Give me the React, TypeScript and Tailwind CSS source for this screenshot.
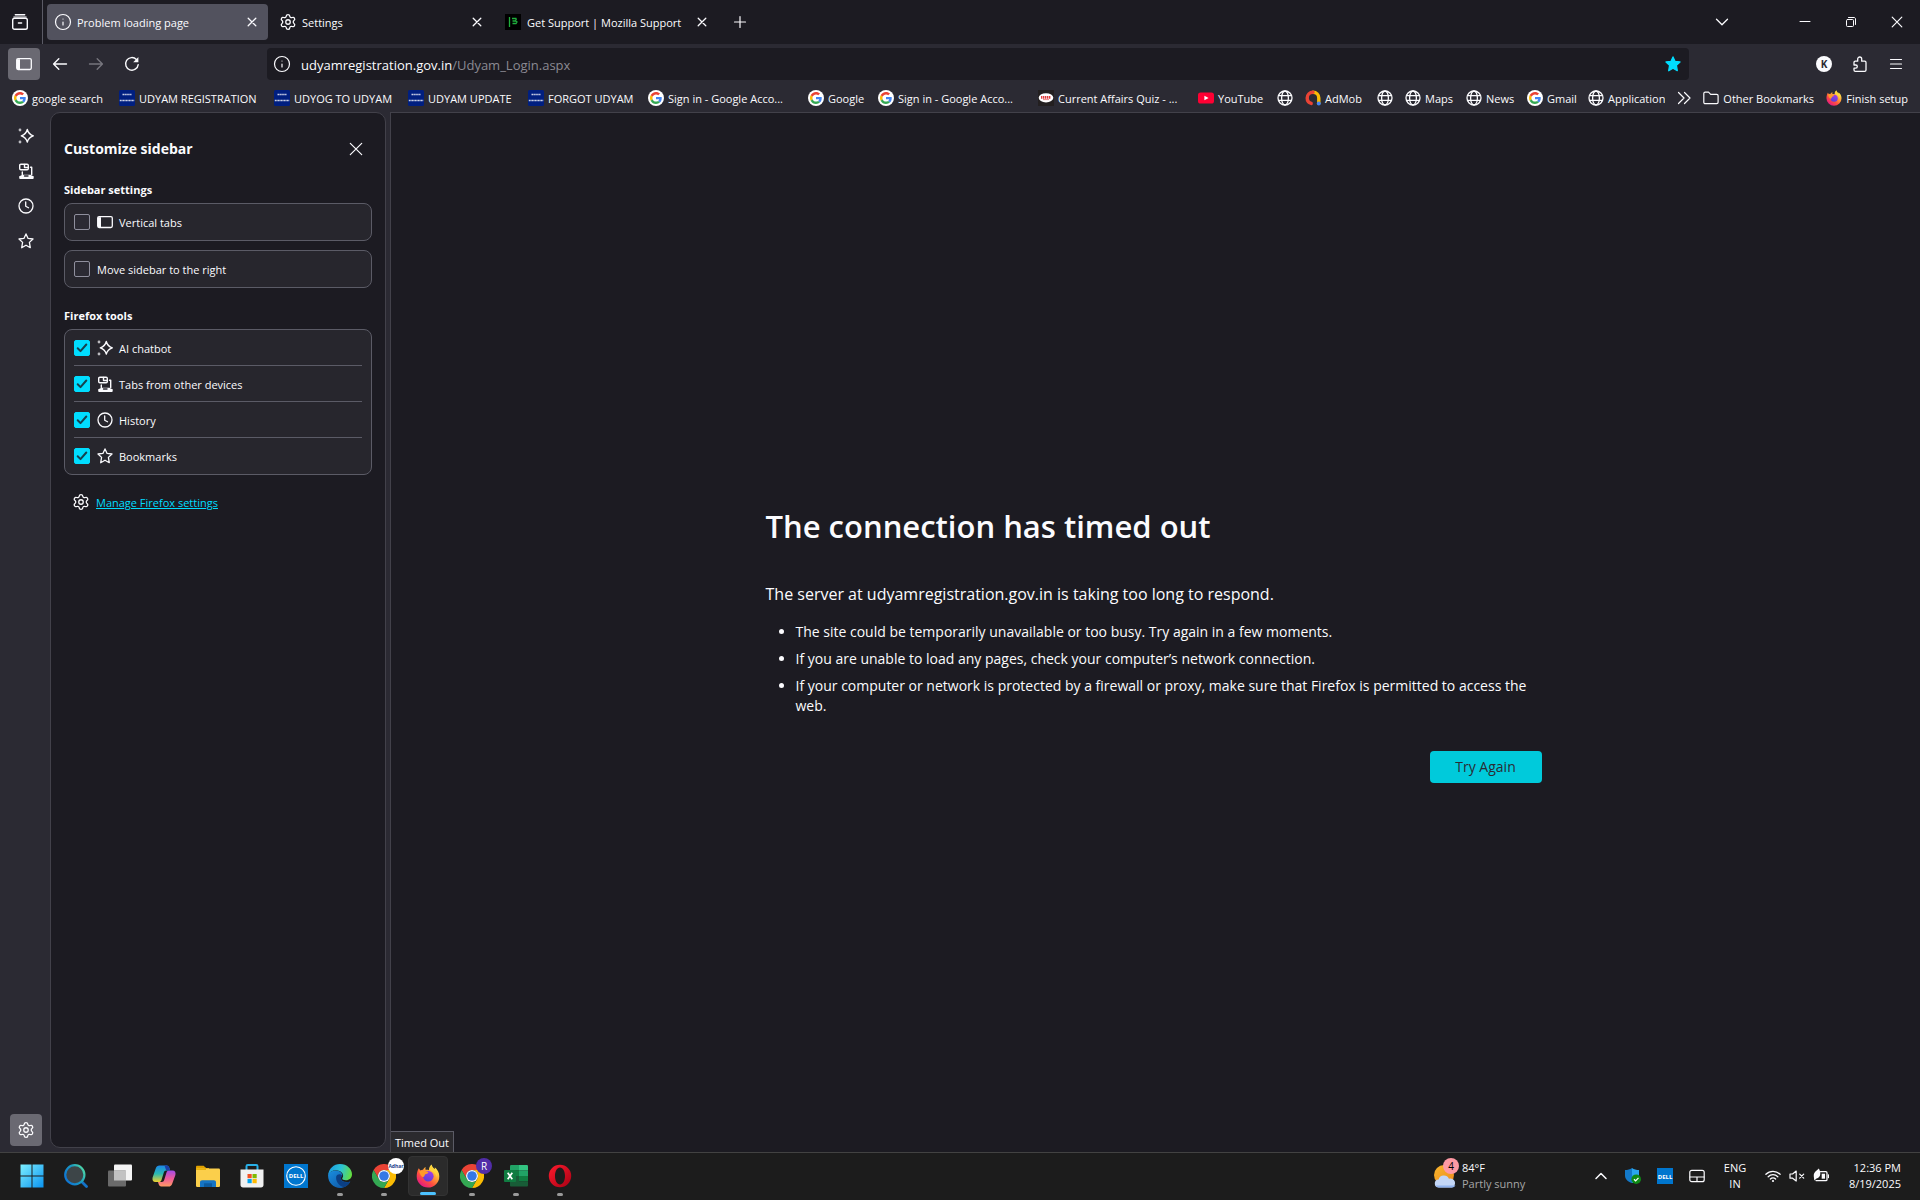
import React, { useState } from 'react';
import { Info, Settings } from 'lucide-react';

interface IconProps {
  className?: string;
}

const line = {
  fill: 'none',
  stroke: 'currentColor',
  strokeLinecap: 'round',
  strokeLinejoin: 'round',
} as const;

/* ---------- browser icons ---------- */

const RecentIcon: React.FC<IconProps> = ({ className = 'size-4' }) => (
  <svg className={className} viewBox="0 0 16 16" {...line} strokeWidth="1.4">
    <path d="M3.3.7h9.4" />
    <path d="M1.8 3h12.4" strokeWidth="1" />
    <rect x=".7" y="4.2" width="14.6" height="11" rx="1.8" />
    <path d="M6.4 9h3.2" />
  </svg>
);

const SidebarIcon: React.FC<IconProps> = ({ className = 'size-4' }) => (
  <svg className={className} viewBox="0 0 16 16" {...line} strokeWidth="1.3">
    <rect x=".7" y="2.7" width="14.6" height="10.8" rx="1.4" />
    <path d="M1 3.2h3v9.8H1z" fill="currentColor" stroke="none" />
  </svg>
);

const CloseIcon: React.FC<IconProps> = ({ className = 'size-4' }) => (
  <svg className={className} viewBox="0 0 16 16" {...line} strokeWidth="1.3">
    <path d="M4.2 4.2l7.6 7.6M11.8 4.2l-7.6 7.6" />
  </svg>
);

const BigCloseIcon: React.FC<IconProps> = ({ className = 'size-4' }) => (
  <svg className={className} viewBox="0 0 16 16" {...line} strokeWidth="1.2">
    <path d="M2.3 2.3l11.4 11.4M13.7 2.3L2.3 13.7" />
  </svg>
);

const PlusIcon: React.FC<IconProps> = ({ className = 'size-4' }) => (
  <svg className={className} viewBox="0 0 16 16" {...line} strokeWidth="1.2">
    <path d="M8 2.5v11M2.5 8h11" />
  </svg>
);

const ArrowIcon: React.FC<IconProps> = ({ className = 'size-4' }) => (
  <svg className={className} viewBox="0 0 16 16" {...line} strokeWidth="1.4">
    <path d="M14.5 8H1.8M6.8 2.8L1.6 8l5.2 5.2" />
  </svg>
);

const ReloadIcon: React.FC<IconProps> = ({ className = 'size-4' }) => (
  <svg className={className} viewBox="0 0 16 16" {...line} strokeWidth="1.4">
    <path d="M14.2 8.6A6.3 6.3 0 1 1 12.4 3.4" />
    <path d="M14.4 1v5.2H9.2z" fill="currentColor" stroke="none" />
  </svg>
);

const PuzzleIcon: React.FC<IconProps> = ({ className = 'size-4' }) => (
  <svg className={className} viewBox="0 0 16 16" {...line} strokeWidth="1.3">
    <path d="M2 9V6.500a1.300 1.300 0 0 1 1.300-1.300h2.400V3a2 2 0 0 1 4 0v2.200h3a1.300 1.300 0 0 1 1.300 1.300v7.500a1.300 1.300 0 0 1-1.300 1.300H3.300A1.300 1.300 0 0 1 2 14v-1.800h1.700a1.600 1.600 0 0 0 0-3.200z" />
  </svg>
);

const MenuIcon: React.FC<IconProps> = ({ className = 'size-4' }) => (
  <svg className={className} viewBox="0 0 16 16" {...line} strokeWidth="1.2">
    <path d="M2.500 3.500h11M2.500 8h11M2.500 12.500h11" />
  </svg>
);

const StarIcon: React.FC<IconProps & { filled?: boolean }> = ({ className = 'size-4', filled }) => (
  <svg className={className} viewBox="0 0 16 16" {...line} strokeWidth="1.3" fill={filled ? 'currentColor' : 'none'}>
    <path d="M8 .9l2.100 4.500 4.900.6-3.600 3.400.9 5.300L8 12.200l-4.300 2.500.9-5.300L1 6l4.900-.6z" />
  </svg>
);

const SparkleIcon: React.FC<IconProps> = ({ className = 'size-4' }) => (
  <svg className={className} viewBox="0 0 16 16" {...line} strokeWidth="1.400">
    <path d="M9.300 1.500c.9 3.700 2.300 5.100 6 6.300-3.700 1.200-5.100 2.600-6 6.300-.9-3.700-2.300-5.100-6-6.300 3.700-1.200 5.100-2.600 6-6.300z" />
    <circle cx="2" cy="2" r="1.400" fill="currentColor" stroke="none" opacity=".7" />
    <circle cx="2" cy="14" r="1.400" fill="currentColor" stroke="none" opacity=".7" />
  </svg>
);

const DevicesIcon: React.FC<IconProps> = ({ className = 'size-4' }) => (
  <svg className={className} viewBox="0 0 16 16" {...line} strokeWidth="1.4">
    <rect x="1.700" y="1.200" width="8.600" height="5.600" rx="1.200" />
    <path d="M6.500 1.500v3h3.600" />
    <path d="M12.500 4.200h1.200v7.300M4.300 9v2.500" />
    <path d="M1.200 13.200c2-.2 2-1.400 3.300-1.400h8c1 0 1 1.200 3.200 1.400v1.800c0 .6-.3.9-.9.9H2.100c-.6 0-.9-.3-.9-.9z" fill="currentColor" stroke="none" />
    <path d="M6.500 13h3.500" stroke="#2b2a33" />
  </svg>
);

const ClockIcon: React.FC<IconProps> = ({ className = 'size-4' }) => (
  <svg className={className} viewBox="0 0 16 16" {...line} strokeWidth="1.3">
    <circle cx="8" cy="8" r="7" />
    <path d="M7.700 4v4.300l2.800 1.500" />
  </svg>
);

const GlobeIcon: React.FC<IconProps> = ({ className = 'size-4' }) => (
  <svg className={className} viewBox="0 0 16 16" {...line} strokeWidth="1.3">
    <circle cx="8" cy="8" r="7" />
    <ellipse cx="8" cy="8" rx="3.400" ry="7" />
    <path d="M1.700 5.700h12.600M1.700 10.400h12.600" />
  </svg>
);

const FolderIcon: React.FC<IconProps> = ({ className = 'size-4' }) => (
  <svg className={className} viewBox="0 0 16 16" {...line} strokeWidth="1.2">
    <path d="M.8 12.300V3.500c0-.8.6-1.400 1.400-1.400h3.300L7.700 4.300h6c.8 0 1.400.6 1.400 1.400v6.600c0 .8-.6 1.400-1.400 1.400H2.200c-.8 0-1.400-.6-1.400-1.400z" />
  </svg>
);

/* ---------- site icons ---------- */

const GoogleIcon: React.FC = () => (
  <svg className="size-4" viewBox="0 0 64 64">
    <circle cx="32" cy="32" r="32" fill="#fff" />
    <g transform="translate(8 8)">
      <path fill="#ea4335" d="M24 9.500c3.540 0 6.710 1.220 9.210 3.600l6.850-6.850C35.900 2.380 30.470 0 24 0 14.620 0 6.510 5.380 2.560 13.220l7.980 6.190C12.430 13.720 17.740 9.500 24 9.500z" />
      <path fill="#4285f4" d="M46.980 24.550c0-1.570-.15-3.090-.38-4.550H24v9.020h12.940c-.58 2.960-2.260 5.480-4.780 7.180l7.730 6c4.510-4.180 7.090-10.360 7.090-17.650z" />
      <path fill="#fbbc05" d="M10.530 28.590c-.48-1.450-.76-2.990-.76-4.590s.27-3.140.76-4.590l-7.980-6.190C.92 16.460 0 20.120 0 24s.92 7.540 2.560 10.780z" />
      <path fill="#34a853" d="M24 48c6.480 0 11.930-2.130 15.890-5.810l-7.730-6c-2.150 1.450-4.920 2.300-8.160 2.300-6.260 0-11.570-4.220-13.470-9.910l-7.980 6.190C6.510 42.620 14.620 48 24 48z" />
    </g>
  </svg>
);

const UdyamIcon: React.FC = () => (
  <svg className="size-4" viewBox="0 0 16 16">
    <rect width="16" height="16" rx="1.500" fill="#001f80" />
    <path d="M3.500 4.500h9" stroke="#c8cfe6" strokeWidth="1.600" strokeDasharray="1.500 .4" />
    <path d="M.8 10.500h14.400" stroke="#c8cfe6" strokeWidth="1.600" strokeDasharray="1.200 .3" />
  </svg>
);

const QuizIcon: React.FC = () => (
  <svg className="size-4" viewBox="0 0 16 16">
    <rect width="16" height="16" fill="#231f20" />
    <ellipse cx="8" cy="7.800" rx="7.300" ry="4.600" fill="#fff" />
    <path d="M3 7.300h10" stroke="#e03a3a" strokeWidth="2.800" strokeDasharray="1.400 .6" />
    <path d="M5 9.600h6" stroke="#e88" strokeWidth="1" />
  </svg>
);

const YouTubeIcon: React.FC = () => (
  <svg className="size-4" viewBox="0 0 16 16">
    <rect y="2.500" width="16" height="11" rx="2.600" fill="#f03" />
    <path d="M6.400 5.700v4.600L10.600 8z" fill="#fff" />
  </svg>
);

const AdMobIcon: React.FC = () => (
  <svg className="size-4" viewBox="0 0 16 16" fill="none" strokeWidth="3.400" strokeLinecap="round">
    <path d="M8 2.200c3.300 0 5.800 2.500 5.800 5.800v5.200" stroke="#fbbc04" />
    <path d="M8 2.200C4.700 2.200 2.200 4.700 2.200 8c0 2.600 1.600 4.700 4 5.400" stroke="#ea4335" />
    <circle cx="13.800" cy="13.600" r="2" fill="#4285f4" />
  </svg>
);

const MozillaIcon: React.FC = () => (
  <svg className="size-4" viewBox="0 0 16 16">
    <rect width="16" height="16" fill="#000" />
    <path d="M4.500 3v10M7 4.500h4.500M7.500 9.500h3.500l1-1.500-1.500-1 1-2.500M7.500 7h3" stroke="#1fae3c" strokeWidth="1.300" fill="none" />
  </svg>
);

const FirefoxIcon: React.FC<IconProps> = ({ className = 'size-4' }) => (
  <svg className={className} viewBox="0 0 24 24">
    <defs>
      <linearGradient id="fx-body" x1=".85" y1=".1" x2=".2" y2=".95">
        <stop offset="0" stopColor="#fff44f" />
        <stop offset=".35" stopColor="#ffa436" />
        <stop offset=".65" stopColor="#ff4f3f" />
        <stop offset="1" stopColor="#e31587" />
      </linearGradient>
      <linearGradient id="fx-core" x1=".7" y1="0" x2=".3" y2="1">
        <stop offset="0" stopColor="#a33be8" />
        <stop offset="1" stopColor="#5540d8" />
      </linearGradient>
    </defs>
    <path fill="url(#fx-body)" d="M2.800 4.200c.6 1 1.100 1.700 1.700 2.200C5.300 5.800 6.300 5.600 7 5.700 7.600 4.600 8.600 3.500 9.700 3c-.4 1-.4 2 0 3 1.200-.2 2.300-.2 3.300.2C12.700 3.800 14 1.500 15.700.4c.2 2.200 1.700 3.300 3.200 4.700.1-.6 0-1.300-.2-1.900 2.700 2 4.600 5.400 4.600 9A11.300 11.300 0 0 1 12 23.600 11.300 11.300 0 0 1 .7 12.300c0-3 .7-5.800 2.100-8.100z" />
    <circle cx="12.300" cy="12.300" r="5.300" fill="url(#fx-core)" />
    <path fill="#ff9a2a" d="M3.200 7.200c2-1.200 4.400-.9 5.700.3 1.400-.3 2.900.2 3.600.9-.9 1.300-2 1.500-3.300 1.900-.8.800-.3 2.500-1.900 2.700-1.900.1-3.500-2.900-4.100-5.800z" />
    <path fill="#ffd43a" d="M13.500 5.800c.4-1.900 1.200-3.400 2.200-4.300.4 2.200 2.200 3.400 3.700 5.200 1.500 1.900 2 4.300 1.300 6.600-.2-1.700-1-3.300-2.200-4.300-1.400-1.300-3.400-2.100-5-3.200z" />
  </svg>
);

/* ---------- taskbar icons ---------- */

const WindowsIcon: React.FC = () => (
  <svg className="size-6" viewBox="0 0 24 24">
    <defs>
      <linearGradient id="win" x1="0" y1="0" x2="1" y2="1">
        <stop offset="0" stopColor="#7df0ff" />
        <stop offset="1" stopColor="#0a93f0" />
      </linearGradient>
    </defs>
    <path fill="url(#win)" d="M.5.500h11v11H.5zM12.500.500h11v11h-11zM.5 12.500h11v11H.5zM12.500 12.500h11v11h-11z" />
  </svg>
);

const SearchIcon: React.FC = () => (
  <svg className="size-6" viewBox="0 0 24 24" fill="none">
    <defs>
      <linearGradient id="lens" x1="1" y1="0" x2="0" y2=".6">
        <stop offset="0" stopColor="#5be8a0" />
        <stop offset=".5" stopColor="#1a9bc0" />
        <stop offset="1" stopColor="#0f78d4" />
      </linearGradient>
    </defs>
    <path d="M17.500 17.500l5 5" stroke="#1473c8" strokeWidth="2.800" strokeLinecap="round" />
    <circle cx="10.800" cy="10.800" r="9.600" fill="#3d4548" stroke="url(#lens)" strokeWidth="2.200" />
  </svg>
);

const TaskViewIcon: React.FC = () => (
  <svg className="size-6" viewBox="0 0 24 24">
    <rect x="6" y=".5" width="18" height="16" rx="1" fill="#f4f4f4" />
    <rect y="6.500" width="18" height="16" rx="1" fill="#6a6a6a" />
    <path d="M6 6.500h12v10H6z" fill="#c2c2c2" />
  </svg>
);

const CopilotIcon: React.FC = () => (
  <svg className="size-6" viewBox="0 0 24 24">
    <defs>
      <linearGradient id="cop-a" x1="0" y1="0" x2="0" y2="1">
        <stop offset="0" stopColor="#1c86e8" />
        <stop offset=".5" stopColor="#29b9b0" />
        <stop offset="1" stopColor="#f0d02c" />
      </linearGradient>
      <linearGradient id="cop-b" x1="0" y1="0" x2="0" y2="1">
        <stop offset="0" stopColor="#a24be8" />
        <stop offset=".5" stopColor="#ee5a9a" />
        <stop offset="1" stopColor="#ff9a62" />
      </linearGradient>
    </defs>
    <path fill="url(#cop-a)" d="M7.500 1.500h7.200c1.500 0 2.200.9 2.700 2.500l.8 2.500h-4c-1.300 0-2 .8-2.400 2L9.500 16c-.5 1.500-1.300 2-2.700 2H3.500C1 18 0 16 .6 13.500L3.800 4.300c.7-1.900 1.800-2.800 3.700-2.800z" />
    <path fill="url(#cop-b)" d="M16.500 22.500H9.300c-1.500 0-2.200-.9-2.700-2.500L6 18h3.800c1.300 0 2-.8 2.400-2l2.300-7.500c.5-1.500 1.300-2 2.700-2h3.300c2.500 0 3.500 2 2.900 4.500l-3.200 8.700c-.7 1.900-1.800 2.800-3.700 2.800z" />
    <path fill="#1b3fa8" d="M12.500 1.500h2.200c1.500 0 2.200.9 2.700 2.500l.8 2.500h-4z" />
  </svg>
);

const ExplorerIcon: React.FC = () => (
  <svg className="size-6" viewBox="0 0 24 24">
    <path fill="#e0a100" d="M0 3c0-.8.500-1.300 1.300-1.300h6.400L10 4h3v5H0z" />
    <rect y="4.500" width="24" height="18.500" rx="1.200" fill="#fbcf4b" />
    <path fill="#e9b10c" d="M0 4.500h8L10 3.500V6H0z" />
    <path fill="#1574c4" d="M4 23v-4.500c0-1.400.8-2.200 2.200-2.200h11.600c1.400 0 2.200.8 2.200 2.200V23z" />
    <path fill="#0c5a9e" d="M8 19.300h8V23H8z" />
  </svg>
);

const StoreIcon: React.FC = () => (
  <svg className="size-6" viewBox="0 0 24 24">
    <path d="M6.500 6V2.200C6.500 1.500 7 1 7.700 1h8.600c.7 0 1.200.5 1.200 1.200V6" fill="none" stroke="#28b0e8" strokeWidth="2" />
    <path fill="#f0f0f0" d="M.5 5.500h23V21c0 1.500-1 2.500-2.500 2.500H3C1.500 23.500.5 22.500.5 21z" />
    <path fill="#f25022" d="M7.500 10h4.200v4.200H7.500z" />
    <path fill="#7fba00" d="M12.500 10h4.200v4.200h-4.200z" />
    <path fill="#00a4ef" d="M7.500 15h4.200v4.200H7.500z" />
    <path fill="#ffb900" d="M12.500 15h4.200v4.200h-4.200z" />
  </svg>
);

const DellIcon: React.FC = () => (
  <svg className="size-6" viewBox="0 0 24 24">
    <rect width="24" height="24" fill="#0076ce" />
    <circle cx="12" cy="12" r="9.300" fill="none" stroke="#fff" strokeWidth="1.100" />
    <text x="12" y="14.200" fontSize="6" fontWeight="700" textAnchor="middle" fill="#fff">DELL</text>
  </svg>
);

const EdgeIcon: React.FC = () => (
  <svg className="size-6" viewBox="0 0 24 24">
    <defs>
      <linearGradient id="edge-top" x1="0" y1=".4" x2="1" y2=".6">
        <stop offset="0" stopColor="#1b9de2" />
        <stop offset=".5" stopColor="#2cc3d5" />
        <stop offset="1" stopColor="#66e03a" />
      </linearGradient>
      <linearGradient id="edge-low" x1="0" y1="0" x2="1" y2="1">
        <stop offset="0" stopColor="#1a8fe0" />
        <stop offset="1" stopColor="#0d4f9c" />
      </linearGradient>
    </defs>
    <path fill="url(#edge-low)" d="M.1 11C1.500 7.500 5 6.500 8 6.500c4 0 6.300 2.500 6.300 5-1 1-1.600 2-1.300 3.500.6 2.500 4.500 4 9.300 2.500C20.200 21.500 16.500 24 12 24 5.500 24-.3 18.500.1 11z" />
    <path fill="#0b3f84" d="M8.200 12.500c-.8 5 3 9.300 7.500 10.800C20 21.800 21.500 19 22.300 17.500 18 19.200 13.500 18 13 15c-.3-1.500.3-2.300 1-3.200-.6-2.200-4.900-2-5.800.700z" />
    <path fill="url(#edge-top)" d="M.1 11.200C.7 4.800 5.700 0 12 0c7 0 12 5 12 10.300 0 3.800-2.700 6-6 6-2.500 0-3.800-.8-3.800-1.700 0-.7.900-1 .9-2.800 0-3.300-3.300-5.600-7.300-5.600-3.300 0-6.200 1.500-7.700 5z" />
  </svg>
);

const ChromeIcon: React.FC = () => (
  <svg className="size-6" viewBox="0 0 24 24">
    <path fill="#ea4335" d="M1.600 6a12 12 0 0 1 20.800 0H12a6 6 0 0 0-5.200 9z" />
    <path fill="#fbbc04" d="M22.400 6A12 12 0 0 1 12 24l5.200-9A6 6 0 0 0 12 6z" />
    <path fill="#34a853" d="M1.600 6l5.200 9a6 6 0 0 0 10.400 0L12 24A12 12 0 0 1 1.600 6z" />
    <circle cx="12" cy="12" r="6" fill="#fff" />
    <circle cx="12" cy="12" r="4.800" fill="#3578e5" />
  </svg>
);

const ExcelIcon: React.FC = () => (
  <svg className="size-6" viewBox="0 0 24 24">
    <path fill="#21a366" d="M6 2.300C6 1.600 6.500 1 7.200 1H15v5.500H6z" />
    <path fill="#33c481" d="M15 1h7.800c.7 0 1.200.6 1.200 1.300v4.200h-9z" />
    <path fill="#107c41" d="M6 6.500h9V12H6z" />
    <path fill="#21a366" d="M15 6.500h9V12h-9z" />
    <path fill="#185c37" d="M6 12h9v10.500H7.200c-.7 0-1.200-.6-1.200-1.300z" />
    <path fill="#107c41" d="M15 12h9v5.500h-9z" />
    <path fill="#185c37" d="M15 17.500h9v3.700c0 .7-.5 1.300-1.200 1.300H15z" />
    <rect y="6" width="12" height="12" rx="1" fill="#107c41" />
    <path d="M3.700 8.800l4.600 6.400M8.300 8.800l-4.600 6.400" stroke="#fff" strokeWidth="1.700" />
  </svg>
);

const OperaIcon: React.FC = () => (
  <svg className="size-6" viewBox="0 0 24 24">
    <defs>
      <linearGradient id="opera" x1="0" y1="0" x2="1" y2="1">
        <stop offset="0" stopColor="#ff1b2d" />
        <stop offset="1" stopColor="#a70014" />
      </linearGradient>
    </defs>
    <path fill="url(#opera)" fillRule="evenodd" d="M12 .8a11.200 11.200 0 1 1 0 22.400A11.200 11.200 0 0 1 12 .8zm0 2.700c-3 0-5 3.800-5 8.500s2 8.500 5 8.500 5-3.800 5-8.500-2-8.500-5-8.500z" />
  </svg>
);

const WeatherIcon: React.FC = () => (
  <svg className="size-6" viewBox="0 0 24 24">
    <defs>
      <linearGradient id="sun" x1="0" y1="0" x2="1" y2="1">
        <stop offset="0" stopColor="#f8b62c" />
        <stop offset="1" stopColor="#ee8a1d" />
      </linearGradient>
    </defs>
    <circle cx="11" cy="11" r="10" fill="url(#sun)" />
    <path fill="#c3d6f6" d="M6 23.500a4 4 0 0 1-.4-8 5.500 5.500 0 0 1 10.300-.7A4.400 4.400 0 0 1 19 23.500z" />
    <path fill="#8fb2ee" d="M2.500 21.500c.8 1.300 2 2 3.500 2h13c1.600 0 2.700-.8 3.500-2z" />
  </svg>
);

const ShieldIcon: React.FC = () => (
  <svg className="size-4" viewBox="0 0 16 16">
    <path fill="#2aa5ee" d="M7 0c2 1.400 4.500 2 7 2v5.500c0 3.500-2.500 6-7 7.500z" />
    <path fill="#1379c9" d="M7 0C5 1.400 2.500 2 0 2v5.500C0 11 2.500 13.500 7 15z" />
    <circle cx="11.200" cy="11.200" r="4.800" fill="#0f8a16" />
    <path d="M9 11.300l1.600 1.600 2.900-3" fill="none" stroke="#fff" strokeWidth="1.300" />
  </svg>
);

const TouchpadIcon: React.FC = () => (
  <svg className="size-4" viewBox="0 0 16 16" {...line} strokeWidth="1.200">
    <rect x=".8" y="2.300" width="14.400" height="11.400" rx="2" />
    <path d="M1 9h14M8 9v4.500" />
  </svg>
);

const WifiIcon: React.FC = () => (
  <svg className="size-4" viewBox="0 0 16 16" {...line} strokeWidth="1.300">
    <path d="M.9 6.300a10 10 0 0 1 14.200 0M3.200 8.700a6.800 6.800 0 0 1 9.600 0M5.400 11a3.700 3.700 0 0 1 5.200 0" />
    <circle cx="8" cy="13" r="1.100" fill="currentColor" stroke="none" />
  </svg>
);

const MuteIcon: React.FC = () => (
  <svg className="size-4" viewBox="0 0 16 16" {...line} strokeWidth="1.200">
    <path d="M1 6v4.200h2.600L7.200 13V3L3.600 6z" />
    <path d="M10.700 6.200l4 4M14.700 6.200l-4 4" />
  </svg>
);

const BatteryIcon: React.FC = () => (
  <svg className="size-4" viewBox="0 0 16 16" {...line} strokeWidth="1.300">
    <path d="M7.500 3.700h5.300c.7 0 1.200.5 1.200 1.200v6.500c0 .7-.5 1.200-1.200 1.200H3" />
    <path d="M15.500 7v2.500" />
    <path d="M.8 8.500C.4 3.600 4 3 5.800.6 8.200 4.500 8 9.800 3.500 10.500L1.300 12.500z" fill="currentColor" stroke="none" />
    <path d="M8.700 5.700v5h3.300v-5z" fill="currentColor" stroke="none" />
  </svg>
);

/* ---------- data ---------- */

const tabs = [
  { title: 'Problem loading page', icon: <Info className="-mx-px size-[18px]" strokeWidth={1.6} />, active: true },
  { title: 'Settings', icon: <Settings className="-mx-px size-[18px]" strokeWidth={1.7} />, active: false },
  { title: 'Get Support | Mozilla Support', icon: <MozillaIcon />, active: false },
];

const bookmarks = [
  { label: 'google search', icon: <GoogleIcon />, width: 'w-[107px]' },
  { label: 'UDYAM REGISTRATION', icon: <UdyamIcon />, width: 'w-[155px]' },
  { label: 'UDYOG TO UDYAM', icon: <UdyamIcon />, width: 'w-[134px]' },
  { label: 'UDYAM UPDATE', icon: <UdyamIcon />, width: 'w-[120px]' },
  { label: 'FORGOT UDYAM', icon: <UdyamIcon />, width: 'w-[120px]' },
  { label: 'Sign in - Google Acco...', icon: <GoogleIcon />, width: 'w-[160px]' },
  { label: 'Google', icon: <GoogleIcon />, width: 'w-[70px]' },
  { label: 'Sign in - Google Acco...', icon: <GoogleIcon />, width: 'w-[160px]' },
  { label: 'Current Affairs Quiz - ...', icon: <QuizIcon />, width: 'w-[160px]' },
  { label: 'YouTube', icon: <YouTubeIcon />, width: 'w-[79px]' },
  { label: '', icon: <GlobeIcon />, width: 'w-7' },
  { label: 'AdMob', icon: <AdMobIcon />, width: 'w-[72px]' },
  { label: '', icon: <GlobeIcon />, width: 'w-7' },
  { label: 'Maps', icon: <GlobeIcon />, width: 'w-[61px]' },
  { label: 'News', icon: <GlobeIcon />, width: 'w-[61px]' },
  { label: 'Gmail', icon: <GoogleIcon />, width: 'w-[61px]' },
  { label: 'Application', icon: <GlobeIcon />, width: 'w-[79px]' },
];

const tools = [
  { id: 'chatbot', label: 'AI chatbot', icon: <SparkleIcon /> },
  { id: 'synced', label: 'Tabs from other devices', icon: <DevicesIcon /> },
  { id: 'history', label: 'History', icon: <ClockIcon /> },
  { id: 'bookmarks', label: 'Bookmarks', icon: <StarIcon /> },
];

const apps = [
  { name: 'Start', icon: <WindowsIcon /> },
  { name: 'Search', icon: <SearchIcon /> },
  { name: 'Task view', icon: <TaskViewIcon /> },
  { name: 'Copilot', icon: <CopilotIcon /> },
  { name: 'File Explorer', icon: <ExplorerIcon /> },
  { name: 'Microsoft Store', icon: <StoreIcon /> },
  { name: 'Dell', icon: <DellIcon /> },
  { name: 'Edge', icon: <EdgeIcon />, running: true },
  { name: 'Chrome', icon: <ChromeIcon />, running: true, badge: 'Adhar' },
  { name: 'Firefox', icon: <FirefoxIcon className="size-6" />, active: true },
  { name: 'Chrome (R)', icon: <ChromeIcon />, running: true, badge: 'R' },
  { name: 'Excel', icon: <ExcelIcon />, running: true },
  { name: 'Opera', icon: <OperaIcon />, running: true },
];

/* ---------- parts ---------- */

const TabStrip: React.FC = () => (
  <header className="flex h-11 shrink-0 items-center bg-[#1c1b22]">
    <button aria-label="View recent browsing" className="flex w-[42px] justify-center pr-0.5">
      <RecentIcon />
    </button>
    <div className="h-full w-px bg-[#5b5b66]" />
    <div className="ml-0.5 flex">
      {tabs.map((tab) => (
        <div key={tab.title} className="flex w-[225px] px-0.5">
          <div className={`flex h-9 flex-1 items-center rounded px-2 ${tab.active ? 'bg-[#52525e]' : ''}`}>
            {tab.icon}
            <span className="ml-1.5 flex-1 pt-0.5 whitespace-nowrap">{tab.title}</span>
            <button aria-label={`Close ${tab.title}`}>
              <CloseIcon />
            </button>
          </div>
        </div>
      ))}
    </div>
    <button aria-label="New tab" className="ml-3">
      <PlusIcon />
    </button>
    <div className="ml-auto flex items-center">
      <button aria-label="List all tabs" className="mr-11 flex w-8 justify-center">
        <svg className="size-4" viewBox="0 0 16 16" {...line} strokeWidth="1.3">
          <path d="M2.500 5.300L8 10.700l5.500-5.400" />
        </svg>
      </button>
      <button aria-label="Minimize" className="flex w-[46px] justify-center">
        <svg className="size-3" viewBox="0 0 12 12" {...line}>
          <path d="M1 5.500h10" />
        </svg>
      </button>
      <button aria-label="Restore" className="flex w-[46px] justify-center">
        <svg className="size-3" viewBox="0 0 12 12" {...line}>
          <rect x="1.500" y="3.500" width="7" height="7" rx="1" />
          <path d="M3.500 1.500h5.500c.9 0 1.500.6 1.500 1.500v5.500" />
        </svg>
      </button>
      <button aria-label="Close window" className="flex w-[46px] justify-center">
        <svg className="size-3" viewBox="0 0 12 12" {...line} strokeWidth="1.200">
          <path d="M1.200 1.200l9.600 9.600M10.800 1.200l-9.600 9.600" />
        </svg>
      </button>
    </div>
  </header>
);

const Toolbar: React.FC = () => (
  <div className="flex h-10 shrink-0 items-center px-2">
    <button aria-label="Sidebar" className="flex size-8 items-center justify-center rounded bg-[#6a6972]">
      <SidebarIcon />
    </button>
    <div className="ml-1 flex gap-1">
      <button aria-label="Back" className="flex size-8 items-center justify-center">
        <ArrowIcon />
      </button>
      <button aria-label="Forward" disabled className="flex size-8 items-center justify-center text-[#77767e]">
        <ArrowIcon className="size-4 rotate-180" />
      </button>
      <button aria-label="Reload" className="flex size-8 items-center justify-center">
        <ReloadIcon />
      </button>
    </div>
    <div className="mx-[119px] flex h-8 flex-1 items-center rounded bg-[#1c1b22] pr-2 pl-[6px]">
      <Info className="size-[18px]" strokeWidth={1.6} />
      {/* host is highlighted, the path is dimmed */}
      <label htmlFor="url" className="ml-2.5 flex-1 pt-0.5 text-[13px]">
        <span>udyamregistration.gov.in</span>
        <span className="text-[#8b8a92]">/Udyam_Login.aspx</span>
      </label>
      <input id="url" className="w-0" aria-label="Address" />
      <button aria-label="Edit this bookmark" className="text-[#00ddff]">
        <StarIcon filled />
      </button>
    </div>
    <div className="flex gap-1">
      <button aria-label="Account" className="flex size-8 items-center justify-center">
        <span className="flex size-4 items-center justify-center rounded-full bg-[#fbfbfe] text-[10px] font-bold text-[#2b2a33]">K</span>
      </button>
      <button aria-label="Extensions" className="flex size-8 items-center justify-center">
        <PuzzleIcon />
      </button>
      <button aria-label="Menu" className="flex size-8 items-center justify-center">
        <MenuIcon />
      </button>
    </div>
  </div>
);

const BookmarksBar: React.FC = () => (
  <nav className="flex h-7 shrink-0 items-center gap-[11px] px-3">
    <div className="flex min-w-0 flex-1 overflow-hidden">
      {bookmarks.map((b, i) => (
        <a key={i} href="#" aria-label={b.label || 'Bookmark'} className={`flex shrink-0 items-center gap-1 whitespace-nowrap ${b.width}`}>
          {b.icon}
          {b.label && <span className="pt-0.5">{b.label}</span>}
        </a>
      ))}
    </div>
    <button aria-label="Show more bookmarks">
      <svg className="size-4" viewBox="0 0 16 16" {...line} strokeWidth="1.200">
        <path d="M2.500 2.500L8 8l-5.500 5.500M8.500 2.500L14 8l-5.500 5.500" />
      </svg>
    </button>
    <a href="#" className="flex w-[112px] items-center gap-1 whitespace-nowrap">
      <FolderIcon />
      <span className="pt-0.5">Other Bookmarks</span>
    </a>
    <a href="#" className="flex items-center gap-1 whitespace-nowrap">
      <FirefoxIcon />
      <span className="pt-0.5">Finish setup</span>
    </a>
  </nav>
);

interface CheckRowProps {
  id: string;
  label: string;
  icon?: React.ReactNode;
  defaultChecked?: boolean;
}

const CheckRow: React.FC<CheckRowProps> = ({ id, label, icon, defaultChecked = false }) => {
  const [checked, setChecked] = useState(defaultChecked);

  return (
    <div className="flex h-9 items-center">
      <span className="mr-[7px] grid size-4 shrink-0">
        <input
          id={id}
          type="checkbox"
          checked={checked}
          onChange={(e) => setChecked(e.target.checked)}
          className="col-start-1 row-start-1 size-4 appearance-none rounded-xs border border-[#8f8f9d] bg-[#2b2a33] checked:border-[#00ddff] checked:bg-[#00ddff]"
        />
        {checked && (
          <svg className="pointer-events-none col-start-1 row-start-1 size-4" viewBox="0 0 16 16" {...line} stroke="#15414f" strokeWidth="2">
            <path d="M3.700 8.300l2.800 2.800 5.800-6.600" />
          </svg>
        )}
      </span>
      <label htmlFor={id} className="flex flex-1 items-center gap-1.5">
        {icon}
        <span className="pt-0.5">{label}</span>
      </label>
    </div>
  );
};

const SidebarLauncher: React.FC = () => (
  <div className="flex w-[50px] shrink-0 flex-col items-center justify-between pt-2 pr-px pb-1.5 pl-0.5">
    <div className="flex flex-col gap-[3px]">
      {tools.map((tool) => (
        <button key={tool.id} aria-label={tool.label} className="flex size-8 items-center justify-center">
          {tool.icon}
        </button>
      ))}
    </div>
    <button aria-label="Customize sidebar" className="flex size-8 items-center justify-center rounded bg-[#6a6972]">
      <Settings className="size-[18px]" strokeWidth={1.7} />
    </button>
  </div>
);

const CustomizePanel: React.FC = () => (
  <aside className="mb-1 flex w-[336px] shrink-0 flex-col rounded-[10px] border border-[#42414a] bg-[#1c1b22] px-[13px]">
    <div className="flex items-center justify-between pt-6 pr-2">
      <h1 className="text-sm leading-6 font-bold">Customize sidebar</h1>
      <button aria-label="Close sidebar">
        <BigCloseIcon />
      </button>
    </div>

    <h2 className="mt-[21px] font-bold">Sidebar settings</h2>
    <div className="mt-[5px] flex flex-col gap-[9px]">
      <div className="rounded-lg border border-[#5b5b66] bg-[#27262d] px-[9px]">
        <CheckRow id="vertical-tabs" label="Vertical tabs" icon={<SidebarIcon />} />
      </div>
      <div className="rounded-lg border border-[#5b5b66] bg-[#27262d] px-[9px]">
        <CheckRow id="move-right" label="Move sidebar to the right" />
      </div>
    </div>

    <h2 className="mt-5 font-bold">Firefox tools</h2>
    <div className="mt-[5px] divide-y divide-[#5b5b66] rounded-lg border border-[#5b5b66] bg-[#27262d] px-[9px]">
      {tools.map((tool) => (
        <CheckRow key={tool.id} id={tool.id} label={tool.label} icon={tool.icon} defaultChecked />
      ))}
    </div>

    <div className="mt-[18px] ml-2 flex items-center gap-1.5">
      <Settings className="size-[18px]" strokeWidth={1.7} />
      <a href="#" className="pt-0.5 text-[#00ddff] underline">Manage Firefox settings</a>
    </div>
  </aside>
);

const ErrorPage: React.FC = () => (
  <main className="relative ml-1 flex flex-1 items-center justify-center border-t border-l border-[#42414a] bg-[#1c1b22] pr-1">
    <div className="w-[776px] pt-5">
      <h1 className="text-[31px] leading-[48px] font-semibold">The connection has timed out</h1>
      <p className="mt-8 text-base leading-6">The server at udyamregistration.gov.in is taking too long to respond.</p>
      <ul className="mt-4 list-disc space-y-[7px] pl-[30px] text-sm leading-5">
        <li>The site could be temporarily unavailable or too busy. Try again in a few moments.</li>
        <li>If you are unable to load any pages, check your computer’s network connection.</li>
        <li>If your computer or network is protected by a firewall or proxy, make sure that Firefox is permitted to access the web.</li>
      </ul>
      <div className="mt-[35px] flex justify-end">
        <button className="h-8 w-28 rounded bg-[#00cadb] text-sm font-medium text-[#2b2a33]">Try Again</button>
      </div>
    </div>
    <div className="absolute bottom-0 left-0 border-t border-r border-[#5b5b66] bg-[#2b2a2e] px-1 pt-0.5 leading-[18px]">Timed Out</div>
  </main>
);

const Taskbar: React.FC = () => (
  <footer className="flex h-12 shrink-0 items-center border-t border-[#424242] bg-[#1c1c1c] pb-px pl-3">
    <div className="flex gap-1">
      {apps.map((app) => (
        <button
          key={app.name}
          aria-label={app.name}
          className={`relative flex size-10 items-center justify-center rounded ${app.active ? 'border border-[#333] bg-[#2b2b2b]' : ''}`}
        >
          {app.icon}
          {app.badge && (
            <span
              className={`absolute top-0.5 right-0 flex size-4 items-center justify-center rounded-full ${
                app.badge === 'R' ? 'bg-[#512da8] text-[10px] text-white' : 'bg-white text-[5px] font-bold text-[#1b3f8b]'
              }`}
            >
              {app.badge}
            </span>
          )}
          {app.running && <span className="absolute bottom-0 h-[3px] w-1.5 rounded-full bg-[#9a9a9a]" />}
          {app.active && <span className="absolute bottom-0 h-[3px] w-4 rounded-full bg-[#4cc2ff]" />}
        </button>
      ))}
    </div>

    <div className="ml-auto flex items-center">
      <button className="mr-[53px] flex items-center gap-[5px] text-left leading-4">
        <span className="relative flex size-6 items-center justify-center">
          <WeatherIcon />
          <span className="absolute -top-1.5 -right-0.5 flex size-4 items-center justify-center rounded-full bg-[#ff99a4] text-[10px] text-black">4</span>
        </span>
        <span className="w-[70px] whitespace-nowrap">
          <span className="block">84°F</span>
          <span className="block text-[#a6a6a6]">Partly sunny</span>
        </span>
      </button>
      <button aria-label="Show hidden icons" className="flex w-8 justify-center">
        <svg className="size-4" viewBox="0 0 16 16" {...line} strokeWidth="1.500">
          <path d="M3 10.500l5-5 5 5" />
        </svg>
      </button>
      <button aria-label="Windows Security" className="flex w-8 justify-center">
        <ShieldIcon />
      </button>
      <button aria-label="Dell" className="flex w-8 justify-center">
        <svg className="size-4" viewBox="0 0 16 16">
          <rect width="16" height="16" fill="#0076ce" />
          <text x="8" y="10.500" fontSize="6" fontWeight="700" textAnchor="middle" fill="#fff">DELL</text>
        </svg>
      </button>
      <button aria-label="Touchpad" className="flex w-8 justify-center">
        <TouchpadIcon />
      </button>
      <button className="flex w-11 flex-col items-center leading-4">
        <span>ENG</span>
        <span>IN</span>
      </button>
      <button aria-label="Network, volume and battery" className="ml-2 flex gap-2">
        <WifiIcon />
        <MuteIcon />
        <BatteryIcon />
      </button>
      <button className="mr-[19px] ml-2 w-16 text-right leading-4 whitespace-nowrap">
        <span className="block">12:36 PM</span>
        <span className="block">8/19/2025</span>
      </button>
    </div>
  </footer>
);

const App: React.FC = () => {
  return (
    <div className="flex h-screen flex-col bg-[#2b2a33] font-['Open_Sans','Noto_Sans',sans-serif] text-[11px] leading-4 text-[#fbfbfe]">
      <TabStrip />
      <Toolbar />
      <BookmarksBar />
      <div className="flex min-h-0 flex-1">
        <SidebarLauncher />
        <CustomizePanel />
        <ErrorPage />
      </div>
      <Taskbar />
    </div>
  );
};

export default App;
